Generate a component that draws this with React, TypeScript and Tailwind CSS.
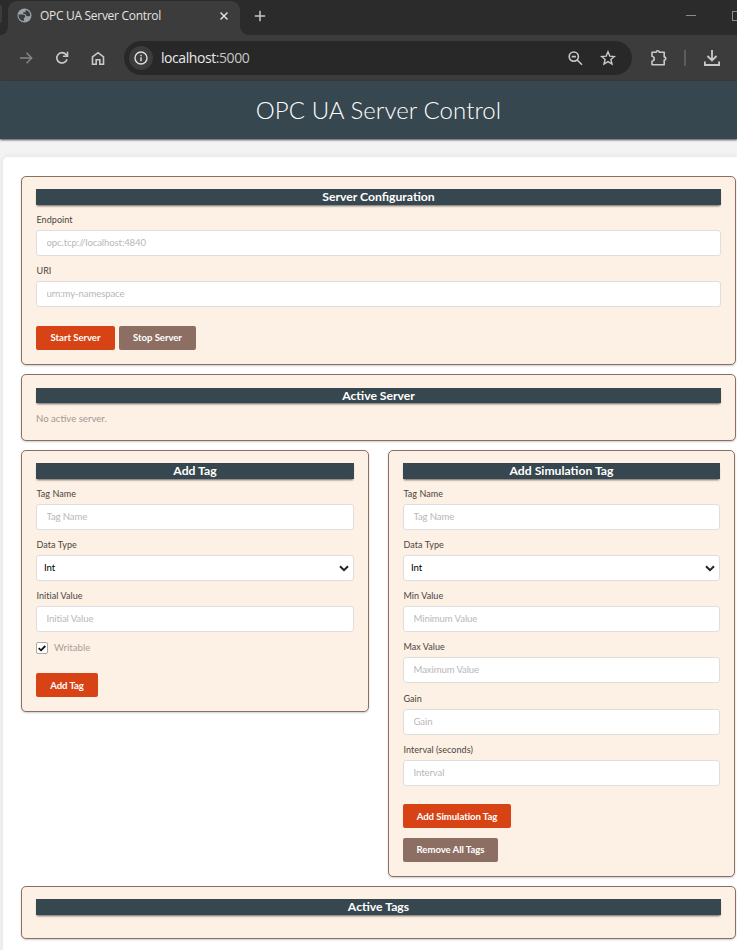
import React from "react";

const TITLE_FONT = "font-['Lato','Liberation_Sans',sans-serif]";

function BrowserTabs() {
  return (
    <div className="flex h-[35px] items-stretch bg-[#2b2b2b]">
      <div className="flex w-2 items-stretch bg-[#3c3c3c]">
        <div className="w-full rounded-br-[8px] bg-[#2b2b2b]">
          <div className="mt-[5px] h-[18px] w-[2px] rounded-r bg-[#3c3c3c]" />
        </div>
      </div>
      <div className="mt-px flex w-[232px] items-center rounded-t-[9px] bg-[#3c3c3c] pr-[11px] pl-[9px]">
        <svg width="15" height="15" viewBox="0 0 15 15" className="-mt-[5px] shrink-0">
          <circle cx="7.5" cy="7.5" r="7" fill="#9aa0a6" />
          <path
            d="M1.8 6.6H6C7.6 6.6 8.2 7.4 8.2 8.7V9.4H6.9V12.9C3.9 12.9 1.6 10.4 1.6 7.5Z M8.6 1.9C11.4 2.3 13.2 4.6 13.3 7.3L12.3 8.3H10.2C9.4 8.3 9 7.6 9 6.6L6.2 5.5V4.2H8.6Z"
            fill="#3c3c3c"
          />
        </svg>
        <span className="-mt-[4px] ml-2 flex-1 text-[12px] tracking-[-0.3px] whitespace-nowrap text-[#e3e3e3]">OPC UA Server Control</span>
        <svg width="10" height="10" viewBox="0 0 10 10" stroke="#dedede" strokeWidth="1.5" className="-mt-[5px]">
          <path d="M1.5 1.5 8.5 8.5M8.5 1.5 1.5 8.5" />
        </svg>
      </div>
      <div className="flex flex-1 items-stretch bg-[#3c3c3c]">
        <div className="flex flex-1 items-center rounded-bl-[9px] bg-[#2b2b2b] pl-[14px]">
          <svg width="12" height="12" viewBox="0 0 12 12" stroke="#c7c7c7" strokeWidth="1.5" className="-mt-[4px]">
            <path d="M6 .8V11.2M.8 6H11.2" />
          </svg>
          <div className="-mt-[4px] ml-auto h-px w-[10px] bg-[#8b8b8b]" />
          <div className="-mt-[4px] ml-9 h-[10px] w-[5px] border border-r-0 border-[#8b8b8b]" />
        </div>
      </div>
    </div>
  );
}

function Toolbar() {
  return (
    <div className="flex h-[46px] items-center bg-[#3c3c3c] pl-[19px]">
      <svg width="14" height="14" viewBox="0 0 14 14" fill="none" stroke="#858585" strokeWidth="1.5">
        <path d="M1 7H12.5M7.5 1.8 12.7 7 7.5 12.2" />
      </svg>
      <svg width="14" height="14" viewBox="0 0 14 14" fill="none" stroke="#c9c9c9" strokeWidth="1.6" className="ml-[22px]">
        <path d="M12 8.2A5.2 5.2 0 1 1 10.9 3.4L12.3 4.8M12.5 .8V5.3H8" />
      </svg>
      <svg width="14" height="15" viewBox="0 0 14 15" fill="none" stroke="#c9c9c9" strokeWidth="1.6" className="ml-[22px]">
        <path d="M1.5 5.9 7 1.7 12.5 5.9V13.3H8.8V8.7H5.2V13.3H1.5Z" />
      </svg>
      <div className="ml-[19px] flex h-[34px] w-[508px] items-center rounded-full bg-[#282828] pr-4 pl-[5px]">
        <div className="flex h-6 w-6 items-center justify-center rounded-full bg-[#3c3c3c]">
          <svg width="14" height="14" viewBox="0 0 14 14" fill="none" stroke="#dedede" strokeWidth="1.4">
            <circle cx="7" cy="7" r="6" />
            <path d="M7 6.3V10.2M7 3.7V5.2" />
          </svg>
        </div>
        <span className="ml-2 flex-1 pb-px text-[14px] tracking-[-0.43px] text-[#e8e8e8]">
          localhost<span className="text-[#c4c7c5]">:5000</span>
        </span>
        <svg width="15" height="15" viewBox="0 0 15 15" fill="none" stroke="#c9c9c9" strokeWidth="1.6">
          <circle cx="5.8" cy="5.6" r="4.6" />
          <path d="M9.2 9 14 13.8M3.7 5.6H7.9" />
        </svg>
        <svg width="16" height="16" viewBox="0 0 16 16" fill="none" stroke="#c9c9c9" strokeWidth="1.4" className="ml-[17px]">
          <path d="M8 1.8 9.8 6.1 14.4 6.5 10.9 9.5 12 14 8 11.6 4 14 5.1 9.5 1.6 6.5 6.2 6.1Z" />
        </svg>
      </div>
      <svg width="18" height="18" viewBox="0 0 18 18" fill="none" stroke="#c9c9c9" strokeWidth="1.6" className="ml-[18px]">
        <path d="M2 3.2H6.2C6.2 1.2 9.2 1.2 9.2 3.2H14.2V8.1C16.4 8.1 16.4 11.1 14.2 11.1V15.8H2V12.2C5 11.8 5 7.8 2 7.2Z" strokeLinejoin="round" />
      </svg>
      <div className="ml-4 h-4 w-[2px] bg-[#5c5c5c]" />
      <svg width="16" height="16" viewBox="0 0 16 16" fill="none" stroke="#c9c9c9" strokeWidth="1.8" className="ml-[18px]">
        <path d="M8 0V10M3.5 6 8 10.4 12.5 6M.9 11.5V15H15.1V11.5" />
      </svg>
    </div>
  );
}

function Card({ title, className, titleClass = "h-4", children }: { title: string; className: string; titleClass?: string; children?: React.ReactNode }) {
  return (
    <section className={`rounded-[5px] border border-[#8d6e63] bg-[#fdf0e4] px-[14px] pt-3 shadow-[0_1px_2px_rgba(0,0,0,0.2)] ${className}`}>
      <h2 className={`flex items-center justify-center bg-[#37474f] pt-px text-[12.2px] leading-none font-bold text-white shadow-[0_2px_2px_-1px_rgba(0,0,0,0.6)] ${titleClass}`}>{title}</h2>
      {children}
    </section>
  );
}

function Label({ children, className = "pt-[9px]" }: { children: React.ReactNode; className?: string }) {
  return <label className={`block h-[25px] pl-[0.5px] text-[9px] leading-[12px] tracking-[0.05px] text-[#4a4542] ${className}`}>{children}</label>;
}

function Input({ placeholder }: { placeholder: string }) {
  return (
    <input
      placeholder={placeholder}
      className="block h-[26px] w-full rounded-[3px] border border-[#dededf] bg-white px-[9.5px] pb-[2px] text-[9.6px] tracking-[-0.12px] text-black placeholder:text-[#b8b8b8]"
    />
  );
}

function Select() {
  return (
    <div className="flex h-[26px] items-center rounded-[3px] border border-[#dededf] bg-white pr-[4px] pl-[7px]">
      <select className="flex-1 appearance-none text-[9.6px] tracking-[-0.12px] text-black">
        <option>Int</option>
      </select>
      <svg width="10" height="7" viewBox="0 0 10 7" fill="none" stroke="#222" strokeWidth="2" className="pointer-events-none">
        <path d="M1 1.2 5 5.2 9 1.2" />
      </svg>
    </div>
  );
}

function Button({ tone, className, children }: { tone: "primary" | "muted"; className: string; children: React.ReactNode }) {
  const color = tone === "primary" ? "bg-[#d84315]" : "bg-[#8d6e63]";
  return <button className={`block h-6 rounded-[2px] text-[9.6px] font-bold tracking-[-0.06px] whitespace-nowrap text-white ${color} ${className}`}>{children}</button>;
}

export default function App() {
  return (
    <div className="h-[950px] w-[737px] overflow-hidden bg-[#f3f3f3]">
      <div className="font-['Open_Sans','Noto_Sans',sans-serif]">
        <BrowserTabs />
        <Toolbar />
      </div>
      <div className={TITLE_FONT}>
        <header className="flex h-[58px] items-center justify-center bg-[#37474f] pb-px pl-5 shadow-[0_1px_2px_rgba(0,0,0,0.7)]">
          <h1 className="text-[24px] leading-none font-light tracking-[0.08px] whitespace-nowrap text-white">OPC UA Server Control</h1>
        </header>
        <main className="mt-[18px] ml-[3px] h-[800px] rounded-tl-[5px] bg-white pt-[19px] pl-[18px] shadow-[0_0_6px_rgba(0,0,0,0.08)]">
          <Card title="Server Configuration" className="h-[189px] w-[715px]">
            <Label>Endpoint</Label>
            <Input placeholder="opc.tcp://localhost:4840" />
            <Label>URI</Label>
            <Input placeholder="urn:my-namespace" />
            <div className="mt-[19px] flex gap-1">
              <Button tone="primary" className="w-[79px]">Start Server</Button>
              <Button tone="muted" className="w-[77px]">Stop Server</Button>
            </div>
          </Card>
          <Card title="Active Server" className="mt-[9px] h-[67px] w-[715px] pt-[13px]" titleClass="h-[15px]">
            <p className="mt-[9px] text-[9.6px] leading-[14px] text-[#a09892]">No active server.</p>
          </Card>
          <div className="mt-[9px] flex items-start gap-[19px]">
            <Card title="Add Tag" className="h-[262px] w-[348px]">
              <Label>Tag Name</Label>
              <Input placeholder="Tag Name" />
              <Label>Data Type</Label>
              <Select />
              <Label>Initial Value</Label>
              <Input placeholder="Initial Value" />
              <label className="mt-[10px] flex h-3 items-center gap-[6px] text-[9.6px] text-[#a99f98]">
                <span className="flex h-3 w-3 items-center justify-center rounded-[2px] border border-[#a9a9a9] bg-white">
                  <svg width="8" height="7" viewBox="0 0 8 7" fill="none" stroke="#111" strokeWidth="1.8">
                    <path d="M.7 3.2 3 5.3 7.3 1" />
                  </svg>
                </span>
                Writable
              </label>
              <Button tone="primary" className="mt-[19px] w-[62px] pt-[2px]">Add Tag</Button>
            </Card>
            <Card title="Add Simulation Tag" className="h-[427px] w-[347px]">
              <Label>Tag Name</Label>
              <Input placeholder="Tag Name" />
              <Label>Data Type</Label>
              <Select />
              <Label>Min Value</Label>
              <Input placeholder="Minimum Value" />
              <Label>Max Value</Label>
              <Input placeholder="Maximum Value" />
              <Label className="mt-px pt-[9px]">Gain</Label>
              <Input placeholder="Gain" />
              <Label>Interval (seconds)</Label>
              <Input placeholder="Interval" />
              <Button tone="primary" className="mt-[18px] w-[108px] pt-[2px]">Add Simulation Tag</Button>
              <Button tone="muted" className="mt-[10px] w-[95px]">Remove All Tags</Button>
            </Card>
          </div>
          <Card title="Active Tags" className="mt-[9px] h-[53px] w-[715px]" />
        </main>
      </div>
    </div>
  );
}
